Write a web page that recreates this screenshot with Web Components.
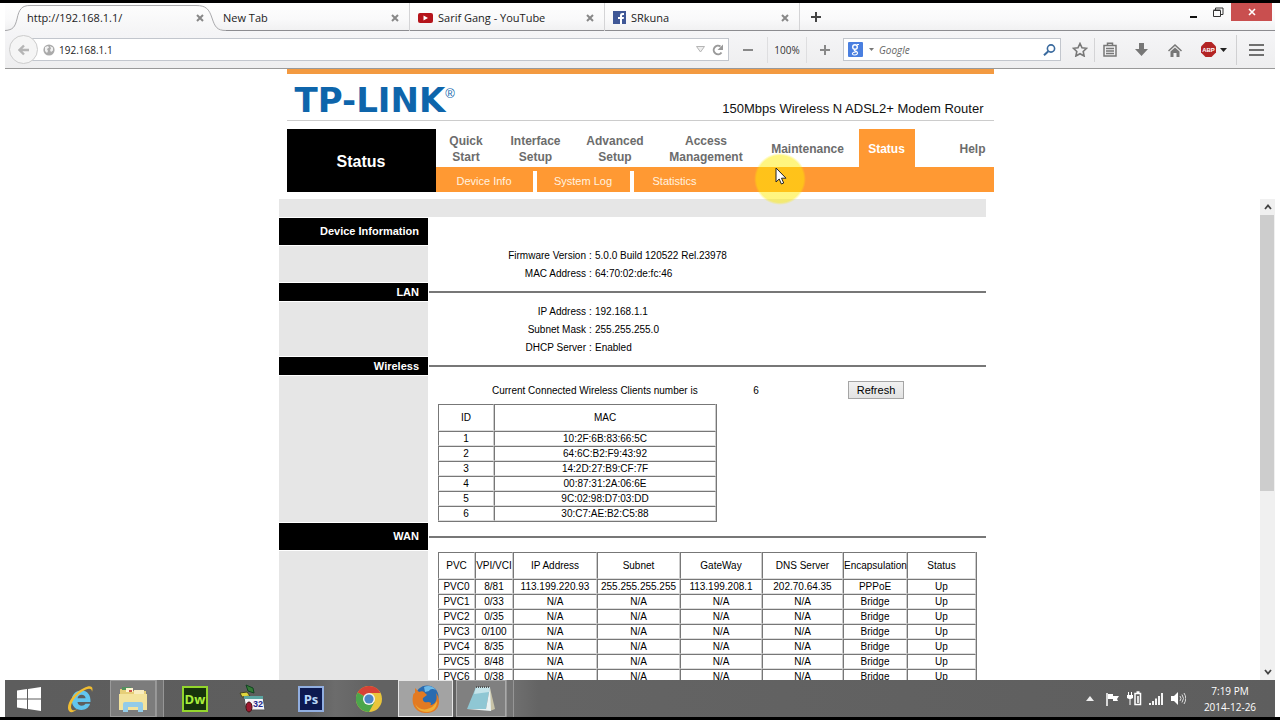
<!DOCTYPE html>
<html lang="en">
<head>
<meta charset="utf-8">
<title>http://192.168.1.1/</title>
<style>
  html, body { height: 100%; margin: 0; }
  body { background: #fff; overflow: hidden; font-family: "Liberation Sans", Arial, sans-serif; }
</style>
</head>
<body>
<desk-top>
  <tab-strip slot="tabs">
    <browser-tab active>http://192.168.1.1/</browser-tab>
    <browser-tab>New Tab</browser-tab>
    <browser-tab separated>
      <svg slot="icon" width="15" height="12" viewBox="0 0 15 12"><rect y="1" width="15" height="10" rx="2" fill="#b5141b"/><path d="M5.500 3.500v5l4.500-2.500z" fill="#fff"/></svg>Sarif Gang - YouTube</browser-tab>
    <browser-tab separated>
      <svg slot="icon" width="13" height="13" viewBox="0 0 13 13"><rect width="13" height="13" fill="#3f5796"/><path d="M7 13V8H5V6h2V4.500C7 2.800 8 2 9.500 2H11v2H10c-.7 0-1 .3-1 .8V6h2l-.3 2H9v5z" fill="#fff"/></svg>SRkuna</browser-tab>
  </tab-strip>
  <tool-bar slot="toolbar"></tool-bar>
  <router-header slot="header" model="150Mbps Wireless N ADSL2+ Modem Router">
    <main-menu></main-menu>
  </router-header>
  <status-frame slot="page">
    <info-section heading="Device Information" tall plain>
      <info-row label="Firmware Version">5.0.0 Build 120522 Rel.23978</info-row>
      <info-row label="MAC Address">64:70:02:de:fc:46</info-row>
    </info-section>
    <info-section heading="LAN">
      <info-row label="IP Address">192.168.1.1</info-row>
      <info-row label="Subnet Mask">255.255.255.0</info-row>
      <info-row label="DHCP Server">Enabled</info-row>
    </info-section>
    <info-section heading="Wireless">
      <client-count value="6">Current Connected Wireless Clients number is</client-count>
      <data-grid source="clients"></data-grid>
    </info-section>
    <info-section heading="WAN" tall>
      <data-grid source="wan"></data-grid>
    </info-section>
  </status-frame>
  <task-bar slot="taskbar"></task-bar>
</desk-top>

<script>
const RESET = `*{box-sizing:border-box} button{font:inherit;color:inherit;border:0;padding:0;margin:0;background:none;display:flex;align-items:center;justify-content:center} a{color:inherit;text-decoration:none} svg{display:block;flex:none}`;

function define(name, render) {
  customElements.define(name, class extends HTMLElement {
    constructor() {
      super();
      this.attachShadow({ mode: "open" });
    }
    connectedCallback() {
      const t = document.createElement("template");
      t.innerHTML = "<style>" + RESET + "</style>" + render(this);
      this.shadowRoot.replaceChildren(t.content.cloneNode(true));
    }
  });
}

/* Screen: browser window above, taskbar below */
define("desk-top", () => `
<style>
  :host{display:flex;flex-direction:column;height:100vh;box-sizing:border-box;border:solid #000;border-width:3px 0;padding:0 5px;overflow:hidden}
  ::slotted([slot=page]){flex:1;min-height:0}
</style>
<slot name="tabs"></slot><slot name="toolbar"></slot><slot name="header"></slot><slot name="page"></slot><slot name="taskbar"></slot>`);

define("tab-strip", () => `
<style>
  :host{display:flex;height:28px;flex:none;box-sizing:border-box;padding-left:13px;border-bottom:1px solid #8c8c90;background:linear-gradient(#fefefe,#f9f9fa 60%,#f1f1f2);font:11px "Open Sans","Noto Sans",sans-serif;color:#1c1c1c}
  .new{width:32px;border-left:1px solid #d4d4d6}
  .win{display:flex;margin-left:auto;height:18px;margin-right:3px}
  .win button{width:25px}
  .win .close{width:41px;background:#c94f4f}
</style>
<slot></slot>
<button class="new" aria-label="Open a new tab"><svg width="10" height="10" viewBox="0 0 10 10"><path d="M5 0v10M0 5h10" stroke="#444" stroke-width="2"/></svg></button>
<div class="win">
  <button aria-label="Minimize"><svg width="9" height="12" viewBox="0 0 9 12"><path d="M1 11h7" stroke="#111" stroke-width="2"/></svg></button>
  <button aria-label="Restore"><svg width="11" height="10" viewBox="0 0 11 10"><path d="M.5 3.500h7v6h-7zM2.500 3V1h7.500v6.500H8M.5 3h7" fill="none" stroke="#333"/></svg></button>
  <button class="close" aria-label="Close"><svg width="8" height="8" viewBox="0 0 8 8"><path d="M1 1l6 6M7 1L1 7" stroke="#fff" stroke-width="1.600"/></svg></button>
</div>`);

define("browser-tab", el => `
<style>
  :host{display:flex;align-items:center;gap:5px;width:195px;height:28px;box-sizing:border-box;padding:1px 10px 0 9px;position:relative;line-height:16px;white-space:nowrap}
  :host([active]){width:196px}
  :host([separated]){border-left:1px solid #d4d4d6;padding-left:8px}
  .shape{position:absolute;left:-13px;top:0}
  .text{flex:1;position:relative}
  button{position:relative}
</style>
${el.hasAttribute("active") ? `<svg class="shape" width="222" height="28" viewBox="0 0 222 28"><defs><linearGradient id="g" x2="0" y2="1"><stop offset="0" stop-color="#fdfdfd"/><stop offset="1" stop-color="#f5f5f6"/></linearGradient></defs><path d="M0 27.500C8 27 10 24 12 16C14 6 17 2.500 25 2.500H191C201 2.500 204 6 207 15C210 24 212 27.500 221 27.500V28H0z" fill="url(#g)"/><path d="M0 27.500C8 27 10 24 12 16C14 6 17 2.500 25 2.500H191C201 2.500 204 6 207 15C210 24 212 27.500 221 27.500" fill="none" stroke="#a9a9ac"/></svg>` : ""}
<slot name="icon"></slot><span class="text"><slot></slot></span>
<button aria-label="Close tab"><svg width="8" height="8" viewBox="0 0 8 8"><path d="M1 1l6 6M7 1L1 7" stroke="#888" stroke-width="2"/></svg></button>`);

define("tool-bar", () => `
<style>
  :host{display:flex;align-items:center;height:38px;flex:none;box-sizing:border-box;border-bottom:1px solid #999;background:linear-gradient(#f5f5f7,#eeeeef);font:10px "Open Sans","Noto Sans",sans-serif;color:#333}
  .back{width:29px;height:29px;border:1px solid #ccc;border-radius:50%;background:#f5f5f5;margin:0 -10px 0 4px;position:relative}
  .field{display:flex;align-items:center;height:23px;background:#fff;border:1px solid #c2c6cd}
  .url{flex:1;min-width:0;padding:0 2px 0 14px;gap:4px}
  input{border:0;outline:0;background:none;font:inherit;color:#222;flex:1;min-width:0;padding:0;height:20px}
  .search{width:218px;padding:0 4px}
  .search input{font-style:italic}
  .search input::placeholder{color:#666}
  .search button{gap:6px;margin-right:5px}
  .mid{height:26px;width:38px}
  .zoom{width:40px;border:solid #dedee0;border-width:0 1px}
  .plus{width:36px}
  .star{width:34px;height:24px;padding-left:4px;border-right:1px solid #d4d4d6}
  .s{width:30px}.m{width:33px}.l{width:45px;gap:4px}
  .menu{width:39px;height:30px;border-left:1px solid #d0d0d2}
</style>
<button class="back" aria-label="Back"><svg width="12" height="12" viewBox="0 0 12 12"><path d="M11 6H2M6 1.500L1.500 6L6 10.500" fill="none" stroke="#b5b5b5" stroke-width="2.400"/></svg></button>
<div class="field url">
  <svg width="12" height="12" viewBox="0 0 12 12"><circle cx="6" cy="6" r="5.600" fill="#aaa"/><path d="M2 3l3-1 1 1.500L4 5l1 2-1 2-2-2zM7 2l3 1.500v3L8 8 7 6l1-1.500z" fill="#f2f2f2"/></svg>
  <input aria-label="Address" value="192.168.1.1">
  <button aria-label="History"><svg width="9" height="7" viewBox="0 0 9 7"><path d="M.5 .5h8L4.500 6z" fill="#eee" stroke="#b5b5b5"/></svg></button>
  <button aria-label="Reload"><svg width="17" height="12" viewBox="0 0 17 12"><path d="M12.500 8.500A4.300 4.300 0 1 1 11.500 2.500" fill="none" stroke="#999" stroke-width="2"/><path d="M14 .5V6H8.500z" fill="#999"/></svg></button>
</div>
<button class="mid" aria-label="Zoom out"><svg width="10" height="2"><rect width="10" height="2" fill="#888"/></svg></button>
<button class="mid zoom">100%</button>
<button class="mid plus" aria-label="Zoom in"><svg width="10" height="10" viewBox="0 0 10 10"><path d="M5 0v10M0 5h10" stroke="#888" stroke-width="2"/></svg></button>
<div class="field search">
  <button aria-label="Search engine"><svg width="15" height="15" viewBox="0 0 15 15"><rect width="15" height="15" rx="1" fill="#4a7fe0"/><circle cx="7" cy="5" r="2.300" fill="none" stroke="#fff" stroke-width="1.400"/><path d="M9 2.500h2M7 7.500c-2 1 1 1.500 2 2.500 1.500 1.500-.5 3-2.300 3-2 0-3-1.200-1.700-2.400.7-.7 2-.6 3-.6" fill="none" stroke="#fff" stroke-width="1.200"/></svg><svg width="5" height="3"><path d="M0 0h5L2.500 3z" fill="#777"/></svg></button>
  <input aria-label="Search" placeholder="Google">
  <svg width="13" height="12" viewBox="0 0 13 12"><circle cx="8" cy="4.500" r="3.600" fill="none" stroke="#3a6a9e" stroke-width="1.600"/><path d="M5.300 7.200L1 11.300" stroke="#3a6a9e" stroke-width="2"/></svg>
</div>
<button class="star" aria-label="Bookmark this page"><svg width="16" height="15" viewBox="0 0 16 15"><path d="M8 1.500l2 4.300 4.600.5-3.400 3.200.9 4.500L8 11.700 3.900 14l.9-4.500L1.400 6.300 6 5.800z" fill="none" stroke="#777" stroke-width="1.600"/></svg></button>
<button class="s" aria-label="Bookmarks"><svg width="14" height="15" viewBox="0 0 14 15"><path d="M1 3.500h12v10.500H1zM4.500 3V1.200h5V3M3 6.500h8M3 9h8M3 11.500h8" fill="none" stroke="#777" stroke-width="1.500"/></svg></button>
<button class="m" aria-label="Downloads"><svg width="13" height="13" viewBox="0 0 13 13"><path d="M4 0h5v6h4L6.500 13 0 6h4z" fill="#777"/></svg></button>
<button class="m" aria-label="Home"><svg width="14" height="14" viewBox="0 0 14 14"><path d="M0 7.500L7 1l7 6.500-1 1L7 3 1 8.500z" fill="#777"/><path d="M2.500 8.500L7 4.500l4.500 4V14H8.500v-4h-3v4h-3z" fill="#777"/></svg></button>
<button class="l" aria-label="Adblock Plus"><svg width="15" height="15" viewBox="0 0 15 15"><path d="M4.500 0h6L15 4.500v6L10.500 15h-6L0 10.500v-6z" fill="#b32424"/><text x="7.500" y="10" font-family="Liberation Sans" font-size="6" font-weight="700" fill="#fff" text-anchor="middle">ABP</text></svg><svg width="7" height="4"><path d="M0 0h7L3.500 4z" fill="#222"/></svg></button>
<button class="menu" aria-label="Menu"><svg width="15" height="12" viewBox="0 0 15 12"><path d="M0 1h15M0 6h15M0 11h15" stroke="#707070" stroke-width="2"/></svg></button>`);

define("router-header", el => `
<style>
  :host{display:block;flex:none;width:100%;max-width:707px;margin:0 auto;padding-bottom:7px}
  .brand{display:flex;justify-content:space-between;align-items:flex-end;height:52px;border-top:5px solid #f39a41;border-bottom:1px solid #ccc;padding:0 10px 0 8px;margin-bottom:8px}
  .logo{display:flex;color:#0e65ab;font:bold 34px/40px "DejaVu Sans",sans-serif}
  .logo sup{font:13px/28px "Liberation Sans",sans-serif;vertical-align:top;-webkit-text-stroke:0}
  .model{font-size:13px;line-height:16px;color:#111;padding-bottom:3px}
</style>
<div class="brand"><a class="logo" href="#home">TP-LINK<sup>®</sup></a><span class="model">${el.getAttribute("model")}</span></div>
<slot></slot>`);

define("main-menu", () => `
<style>
  :host{display:grid;grid-template-columns:149px 1fr;position:relative}
  h1{margin:0;padding-top:2px;background:#000;color:#fff;font-size:16px;display:flex;align-items:center;justify-content:center}
  .top{display:grid;grid-template-columns:61px 78px 81px 101px 102px 56px 1fr;height:38px;font:bold 12px/16px "Liberation Sans",sans-serif;color:#6c6c6c;text-align:center}
  .top a{display:flex;align-items:center;justify-content:center;padding-top:2px}
  .top .on{background:#f93;color:#fff}
  .top .help{justify-content:flex-end;padding-right:8px}
  .sub{display:flex;height:25px;background:#f93;color:#fff3e0;padding-top:4px;font-size:11px;line-height:20px;text-align:center}
  .sub a{width:97px;margin-right:4px;position:relative}
  .sub a:nth-child(2){width:93px}
  .sub a:nth-child(3){width:82px}
  .sub a:not(:last-child)::after{content:"";position:absolute;left:100%;top:0;width:4px;height:21px;background:#fff}
  .pointer{position:absolute;left:467px;top:24px}
  .arrow{position:absolute;left:488px;top:38px}
</style>
<h1>Status</h1>
<nav>
  <div class="top">
    <a href="#quick">Quick<br>Start</a><a href="#interface">Interface<br>Setup</a><a href="#advanced">Advanced<br>Setup</a><a href="#access">Access<br>Management</a><a href="#maintenance">Maintenance</a><a class="on" href="#status">Status</a><a class="help" href="#help">Help</a>
  </div>
  <div class="sub"><a href="#device">Device Info</a><a href="#log">System Log</a><a href="#stats">Statistics</a></div>
</nav>
<svg class="pointer" width="52" height="52" viewBox="0 0 52 52"><defs><radialGradient id="p"><stop offset=".9" stop-color="#ffec00" stop-opacity=".5"/><stop offset="1" stop-color="#ffec00" stop-opacity="0"/></radialGradient></defs><circle cx="26" cy="26" r="26" fill="url(#p)"/></svg>
<svg class="arrow" width="12" height="18" viewBox="0 0 12 18"><path d="M1 1v14l3.200-3 2.200 5 2.300-1-2.200-4.800H11z" fill="#fff" stroke="#222"/></svg>`);

define("status-frame", () => `
<style>
  :host{display:flex;overflow:hidden}
  .view{flex:1;min-width:0;overflow:hidden}
  .page{max-width:707px;margin:0 auto;display:grid;gap:1px}
  .band{height:18px;background:#e6e6e6}
  .bar{width:15px;background:#f0f0f0;display:flex;flex-direction:column}
  .bar button{height:16px;width:100%}
  .thumb{height:276px;background:#cdcdcd;margin-right:1px}
  .bar .down{margin-top:auto}
</style>
<div class="view"><main class="page"><div class="band"></div><slot></slot></main></div>
<div class="bar">
  <button aria-label="Scroll up"><svg width="8" height="6" viewBox="0 0 8 6"><path d="M1 5l3-3.500L7 5" fill="none" stroke="#444" stroke-width="1.800"/></svg></button>
  <div class="thumb"></div>
  <button class="down" aria-label="Scroll down"><svg width="8" height="6" viewBox="0 0 8 6"><path d="M1 1l3 3.500L7 1" fill="none" stroke="#444" stroke-width="1.800"/></svg></button>
</div>`);

define("info-section", el => `
<style>
  :host{display:grid;grid-template-columns:149px 1fr;row-gap:1px;font-size:10px;color:#000}
  h2{margin:0;background:#000;color:#fff;font-size:11px;line-height:18px;text-align:right;padding-right:9px}
  :host([tall]) h2{line-height:27px}
  .rule{align-self:center;height:2px;background:#777;margin-left:1px}
  :host([plain]) .rule{visibility:hidden}
  .side{background:#e6e6e6}
</style>
<h2>${el.getAttribute("heading")}</h2><div class="rule"></div>
<div class="side"></div><div class="body"><slot></slot></div>`);

define("info-row", el => `
<style>
  :host{display:grid;grid-template-columns:158px 9px 1fr;height:18px;line-height:20px}
  .k{text-align:right}
  .c{text-align:center}
</style>
<span class="k">${el.getAttribute("label")}</span><span class="c">:</span><span><slot></slot></span>`);

define("client-count", el => `
<style>
  :host{display:grid;grid-template-columns:206px 116px auto 1fr;align-items:center;height:28px;padding-left:64px;white-space:nowrap}
  output{text-align:center}
  button{margin-left:34px;width:56px;height:18px;border:1px solid #a5a5a5;background:linear-gradient(#f2f2f2,#e2e2e2);font-size:11px}
</style>
<label for="n"><slot></slot></label><output id="n">${el.getAttribute("value")}</output><button>Refresh</button>`);

const SOURCES = {
  clients: {
    widths: [56, 222],
    head: ["ID", "MAC"],
    rows: ["10:2F:6B:83:66:5C", "64:6C:B2:F9:43:92", "14:2D:27:B9:CF:7F", "00:87:31:2A:06:6E", "9C:02:98:D7:03:DD", "30:C7:AE:B2:C5:88"].map((m, i) => [i + 1, m])
  },
  wan: {
    widths: [37, 38, 84, 83, 82, 81, 64, 69],
    head: ["PVC", "VPI/VCI", "IP Address", "Subnet", "GateWay", "DNS Server", "Encapsulation", "Status"],
    rows: [["PVC0", "8/81", "113.199.220.93", "255.255.255.255", "113.199.208.1", "202.70.64.35", "PPPoE", "Up"]].concat(
      ["0/33", "0/35", "0/100", "8/35", "8/48", "0/38"].map((v, i) => ["PVC" + (i + 1), v, "N/A", "N/A", "N/A", "N/A", "Bridge", "Up"]))
  }
};

define("data-grid", el => {
  const s = SOURCES[el.getAttribute("source")];
  const total = s.widths.reduce((a, b) => a + b);
  return `
<style>
  :host{display:block;padding-left:10px}
  :host([source=wan]){padding-top:1px}
  table{table-layout:fixed;width:${total}px;border-collapse:separate;border-spacing:0;border:solid #777;border-width:0 1px 1px 0}
  th,td{font-size:10px;font-weight:400;text-align:center;padding:1px 0 0;height:15px;line-height:12px;border:1px solid;border-color:#777 #ccc #ddd #777;white-space:nowrap}
  th{height:27px}
</style>
<table><colgroup>${s.widths.map(w => `<col style="width:${w}px">`).join("")}</colgroup>
<thead><tr>${s.head.map(h => `<th scope="col">${h}</th>`).join("")}</tr></thead>
<tbody>${s.rows.map(r => `<tr>${r.map(c => `<td>${c}</td>`).join("")}</tr>`).join("")}</tbody></table>`;
});

define("task-bar", () => `
<style>
  :host{display:flex;align-items:stretch;height:37px;flex:none;background:linear-gradient(90deg,#5d5d5d,#5e5e5e 24%,#6c6c6c 26%,#626262 29%,#626262 36%,#757575 39%,#646464 42%,#5e5e5e);color:#fff;font:10px "Open Sans","Noto Sans",sans-serif;position:relative}
  .app{width:58px}
  .start{width:47px}
  .ie{width:58px}
  .open{border:1px solid #9a9a9a;background:#7c7c7c;width:46px}
  .edge{width:8px;border:solid #969696;border-width:0 1px;background:#747474;margin-right:2px}
  .ff{width:55px;background:#a3a3a3;border:1px solid #e6e6e6}
  .note{width:50px;margin-left:3px;background:#808080;border:1px solid #aaa}
  .tray{display:flex;align-items:center;margin-left:auto}
  .tray button{width:22px;height:24px}
  time{width:86px;text-align:center;line-height:16px;padding-right:4px}
</style>
<button class="start" aria-label="Start"><svg width="24" height="24" viewBox="0 0 24 24"><path d="M0 3.500L10 2v9.500H0zM11 1.900L24 0v11.500H11zM0 12.500h10V22L0 20.500zM11 12.500h13V24l-13-1.900z" fill="#fff"/></svg></button>
<button class="ie" aria-label="Internet Explorer"><svg width="28" height="30" viewBox="0 0 28 30"><path d="M23.500 18H10.500c.3 2.500 2 3.700 4.200 3.700 1.700 0 3-.6 3.800-1.900h4.600c-1.300 3.900-4.300 6.200-8.700 6.200C8.500 26 4.800 22 4.800 16.300S8.700 6.500 14.400 6.500c6 0 9.500 4.500 9.100 11.500zM10.600 14.300h8c-.2-2.300-1.700-3.600-4-3.600s-3.600 1.300-4 3.600z" fill="#62c5ee"/><path d="M2 27C-2 22 6 9 17 4c6-3 10-2 8 4 0-3-2-4-6-2.500C10 9 2 20 4.500 25c1 2 3 1.500 6 0C7 28 4 29.500 2 27z" fill="#f0bd32"/></svg></button>
<button class="app open" aria-label="File Explorer"><svg width="30" height="28" viewBox="0 0 30 28"><path d="M2 4h8l2 2h16v19H2z" fill="#e6cf78"/><path d="M4 2h9v3H4z" fill="#52905d"/><path d="M8 3h7v4H8z" fill="#fff5cf"/><path d="M16 5h10v4H16z" fill="#f8edc0"/><path d="M11 5h3v2h-3z" fill="#cc5348"/><path d="M1 9h28v16H1z" fill="#f3e39c"/><path d="M5 27v-8q0-2 2-2h16q2 0 2 2v8h-5v-5H10v5z" fill="#92cbe8"/></svg></button><span class="edge"></span>
<button class="app" aria-label="Dreamweaver"><svg width="26" height="26" viewBox="0 0 26 26"><path d="M1 1h24v24H1z" fill="#17330c" stroke="#93d62c" stroke-width="2"/><text x="13" y="18" font-family="Open Sans" font-weight="700" font-size="13" fill="#aaf03c" text-anchor="middle">Dw</text></svg></button>
<button class="app" aria-label="Calendar"><svg width="28" height="32" viewBox="0 0 28 32"><path d="M7 2l7 3 1 5-6-2z" fill="#357a36" stroke="#142"/><path d="M1 10l7-1 3 4-8 1z" fill="#e1d73d" stroke="#442"/><path d="M5 14h19l2 13H7z" fill="#f4f4f8" stroke="#555"/><path d="M5 13h19v3H5z" fill="#5ba4a0"/><ellipse cx="10" cy="24" rx="3" ry="5" fill="#9e1930" stroke="#411"/><text x="19" y="24" font-family="Liberation Sans" font-weight="700" font-size="9" fill="#25288c" text-anchor="middle">32</text></svg></button>
<button class="app" aria-label="Photoshop"><svg width="26" height="26" viewBox="0 0 26 26"><path d="M1 1h24v24H1z" fill="#0c1950" stroke="#91aee0" stroke-width="2"/><text x="13" y="18" font-family="Open Sans" font-weight="700" font-size="13" fill="#b9d8f8" text-anchor="middle">Ps</text></svg></button>
<button class="app" aria-label="Chrome"><svg width="26" height="26" viewBox="0 0 26 26"><circle cx="13" cy="13" r="13" fill="#e9c53b"/><path d="M13 13L1.700 6.500A13 13 0 0 1 24.500 7H13z" fill="#d64236"/><path d="M13 13L1.700 6.500A13 13 0 0 0 13 26l5.500-10z" fill="#4ca64c"/><circle cx="13" cy="13" r="6" fill="#f4f4f4"/><circle cx="13" cy="13" r="4.600" fill="#4a86c8"/></svg></button>
<button class="ff" aria-label="Firefox"><svg width="28" height="28" viewBox="0 0 28 28"><circle cx="15" cy="12" r="11.500" fill="#2a6bb0"/><path d="M12 2c4-2 9-1 12 3-4-2-6-1-7 1l-4 1z" fill="#6cb9e8"/><path d="M3 3l4 4c2-1 4-1 5 0l3 3-4 3c-1 3 2 5 5 4 3 0 4 2 2 3 5 0 8-5 6-12 6 8 3 19-8 20C4 29-1 20 1 11c0-2 1-3 2-3z" fill="#e37a22"/><path d="M3 18c2 6 9 8 15 5 3-1 5-4 7-7 0 7-4 11-10 11-7 0-11-4-12-9z" fill="#efb039"/></svg></button>
<button class="note" aria-label="Notepad"><svg width="30" height="28" viewBox="0 0 30 28"><path d="M24 3l5 21-5 2z" fill="#c9c4a8"/><path d="M10 2h14l-4 22H1z" fill="#8fc7d4"/><path d="M10 2h14l-1 5-15 2z" fill="#c5e4ea"/><path d="M1 24h19l4-22 1 24z" fill="#e9f2f2"/><path d="M10 2h14" stroke="#555" stroke-dasharray="1 1" stroke-width="2"/></svg></button><span class="edge"></span>
<div class="tray">
  <button aria-label="Show hidden icons"><svg width="8" height="5"><path d="M4 0l4 5H0z" fill="#eee"/></svg></button>
  <button aria-label="Action Center"><svg width="15" height="14" viewBox="0 0 15 14"><path d="M2 1v13" stroke="#fff" stroke-width="1.500"/><path d="M3 2h5v2h6l-2 3 1 2H8V7H3z" fill="#fff"/></svg></button>
  <button aria-label="Battery"><svg width="15" height="15" viewBox="0 0 15 15"><path d="M1.500 1v3M4.500 1v3M3 7v7" stroke="#fff"/><path d="M0 4h6v3L4 8H2L0 7z" fill="#fff"/><path d="M8 2.500h5.500v11H8zM9.500 1h3" fill="none" stroke="#fff" stroke-width="1.500"/><path d="M10 5h2v7h-2z" fill="#ddd"/></svg></button>
  <button aria-label="Network"><svg width="14" height="12" viewBox="0 0 14 12"><path d="M1 10v2M4 8v4M7 5.500V12M10 3v9M13 0v12" stroke="#f3f3f3" stroke-width="2"/></svg></button>
  <button aria-label="Volume"><svg width="15" height="13" viewBox="0 0 15 13"><path d="M0 4h3l4-4v13L3 9H0z" fill="#fff"/><path d="M9 4q2 2.500 0 5M11 2.500q3 4 0 8M13 1q3.500 5.500 0 11" fill="none" stroke="#ddd"/></svg></button>
  <time datetime="2014-12-26T19:19">7:19 PM<br>2014-12-26</time>
</div>`);
</script>
</body>
</html>
